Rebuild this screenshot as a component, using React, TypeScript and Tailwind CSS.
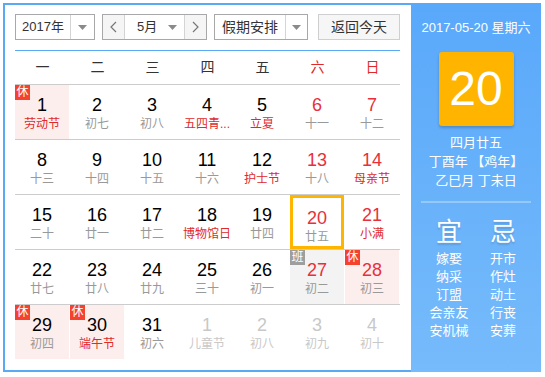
import React from "react";

type Day = {
  n: number;
  sub: string;
  red?: boolean; // number red (weekend)
  fest?: boolean; // sub text red
  dim?: boolean; // other month
  badge?: "休" | "班";
  today?: boolean;
};

const weeks: Day[][] = [
  [
    { n: 1, sub: "劳动节", fest: true, badge: "休" },
    { n: 2, sub: "初七" },
    { n: 3, sub: "初八" },
    { n: 4, sub: "五四青...", fest: true },
    { n: 5, sub: "立夏", fest: true },
    { n: 6, sub: "十一", red: true },
    { n: 7, sub: "十二", red: true },
  ],
  [
    { n: 8, sub: "十三" },
    { n: 9, sub: "十四" },
    { n: 10, sub: "十五" },
    { n: 11, sub: "十六" },
    { n: 12, sub: "护士节", fest: true },
    { n: 13, sub: "十八", red: true },
    { n: 14, sub: "母亲节", red: true, fest: true },
  ],
  [
    { n: 15, sub: "二十" },
    { n: 16, sub: "廿一" },
    { n: 17, sub: "廿二" },
    { n: 18, sub: "博物馆日", fest: true },
    { n: 19, sub: "廿四" },
    { n: 20, sub: "廿五", red: true, today: true },
    { n: 21, sub: "小满", red: true, fest: true },
  ],
  [
    { n: 22, sub: "廿七" },
    { n: 23, sub: "廿八" },
    { n: 24, sub: "廿九" },
    { n: 25, sub: "三十" },
    { n: 26, sub: "初一" },
    { n: 27, sub: "初二", red: true, badge: "班" },
    { n: 28, sub: "初三", red: true, badge: "休" },
  ],
  [
    { n: 29, sub: "初四", badge: "休" },
    { n: 30, sub: "端午节", fest: true, badge: "休" },
    { n: 31, sub: "初六" },
    { n: 1, sub: "儿童节", dim: true },
    { n: 2, sub: "初八", dim: true },
    { n: 3, sub: "初九", dim: true },
    { n: 4, sub: "初十", dim: true },
  ],
];

const heads = ["一", "二", "三", "四", "五", "六", "日"];
const yi = ["嫁娶", "纳采", "订盟", "会亲友", "安机械"];
const ji = ["开市", "作灶", "动土", "行丧", "安葬"];

function Caret() {
  return (
    <svg width="9" height="5" viewBox="0 0 9 5">
      <path d="M0 0h9L4.5 5z" fill="#8a8a8a" />
    </svg>
  );
}

function Chevron({ dir }: { dir: "l" | "r" }) {
  return (
    <svg width="7" height="12" viewBox="0 0 7 12">
      <path
        d={dir === "l" ? "M6 1L1 6l5 5" : "M1 1l5 5-5 5"}
        fill="none"
        stroke="#777"
        strokeWidth="1.2"
      />
    </svg>
  );
}

function Cell({ d }: { d: Day }) {
  const bg =
    d.badge === "休" ? "bg-[#fdeeee]" : d.badge === "班" ? "bg-[#f3f3f3]" : "";
  const numColor = d.dim ? "text-[#c8c8c8]" : d.red ? "text-[#e8303a]" : "text-black";
  const subColor = d.dim ? "text-[#c8c8c8]" : d.fest ? "text-[#e02a2a]" : "text-[#999]";
  return (
    <div
      className={`relative w-[54px] h-[54px] flex flex-col items-center pt-[9px] ${bg} ${
        d.today ? "border-[3px] border-[#ffb400] pt-[6px]" : ""
      }`}
    >
      {d.badge && (
        <span
          className={`absolute top-0 left-0 w-[15px] h-[15px] text-[12px] leading-[15px] text-center text-white ${
            d.badge === "休" ? "bg-[#f5412d]" : "bg-[#9e9e9e]"
          }`}
        >
          {d.badge}
        </span>
      )}
      <span className={`text-[18px] leading-[22px] ${numColor}`}>{d.n}</span>
      <span className={`text-[12px] leading-[16px] whitespace-nowrap ${subColor}`}>{d.sub}</span>
    </div>
  );
}

export default function App() {
  return (
    <div className="w-[545px] h-[377px] bg-white pt-[3px] pl-[3px] font-['Liberation_Sans','Noto_Sans_CJK_SC',sans-serif]">
      <div className="flex w-[538px] h-[369px] border-y-2 border-l-2 border-[#5aa9f5]">
        {/* Calendar */}
        <div className="w-[406px] pl-[10px] pt-[9px]">
          <div className="flex h-[26px] w-[385px] text-[13px] text-[#333]">
            <div className="flex w-[80px] border border-[#a8a8a8]">
              <div className="w-[54px] flex items-center justify-center">2017年</div>
              <div className="flex-1 flex items-center justify-center border-l border-[#d4d4d4]">
                <Caret />
              </div>
            </div>
            <div className="flex ml-[7px] w-[105px] border border-[#a8a8a8]">
              <div className="w-[22px] flex items-center justify-center bg-[#f5f5f5] border-r border-[#d4d4d4]">
                <Chevron dir="l" />
              </div>
              <div className="w-[59px] flex items-center pl-[12px] pr-[7px] justify-between">
                <span>5月</span>
                <Caret />
              </div>
              <div className="flex-1 flex items-center justify-center bg-[#f5f5f5] border-l border-[#d4d4d4]">
                <Chevron dir="r" />
              </div>
            </div>
            <div className="flex ml-[7px] w-[94px] border border-[#a8a8a8]">
              <div className="w-[70px] flex items-center justify-center text-[14px]">假期安排</div>
              <div className="flex-1 flex items-center justify-center border-l border-[#d4d4d4]">
                <Caret />
              </div>
            </div>
            <div className="ml-[10px] w-[82px] flex items-center justify-center border border-[#cfcfcf] bg-[#f6f6f6] text-[14px]">
              返回今天
            </div>
          </div>

          <div className="mt-[10px] h-px w-[385px] bg-[#5aa9f5]" />

          <div className="grid grid-cols-7 w-[385px] h-[33px] items-center text-[14px]">
            {heads.map((h, i) => (
              <div key={h} className={`text-center ${i >= 5 ? "text-[#e02a2a]" : "text-[#333]"}`}>
                {h}
              </div>
            ))}
          </div>

          {weeks.map((w, wi) => (
            <div key={wi} className="grid grid-cols-7 w-[385px] border-t border-[#cccccc]">
              {w.map((d, di) => (
                <Cell key={di} d={d} />
              ))}
            </div>
          ))}
        </div>

        {/* Side panel */}
        <div className="w-[130px] -my-[2px] bg-linear-to-b from-[#59a8fa] to-[#76bbfb] text-white flex flex-col items-center pt-[16px]">
          <div className="text-[13px] leading-[18px]">2017-05-20 星期六</div>
          <div className="mt-[15px] w-[75px] h-[74px] rounded-[3px] bg-[#ffb400] shadow-[0_2px_3px_rgba(0,0,0,0.2)] flex items-center justify-center text-[48px] leading-none">
            20
          </div>
          <div className="mt-[7px] text-[13px] leading-[19px] text-center">
            <div>四月廿五</div>
            <div>丁酉年 【鸡年】</div>
            <div>乙巳月 丁未日</div>
          </div>
          <div className="mt-[11px] h-[2px] w-[110px] bg-white/30" />
          <div className="mt-[14px] flex w-[108px]">
            <div className="w-[54px] flex flex-col items-center">
              <div className="text-[26px] leading-[30px] [text-shadow:0_2px_2px_rgba(0,0,0,0.15)]">宜</div>
              <div className="mt-[3px] text-[13px] leading-[18px] text-center">
                {yi.map((t) => (
                  <div key={t}>{t}</div>
                ))}
              </div>
            </div>
            <div className="w-[54px] flex flex-col items-center">
              <div className="text-[26px] leading-[30px] [text-shadow:0_2px_2px_rgba(0,0,0,0.15)]">忌</div>
              <div className="mt-[3px] text-[13px] leading-[18px] text-center">
                {ji.map((t) => (
                  <div key={t}>{t}</div>
                ))}
              </div>
            </div>
          </div>
        </div>
      </div>
    </div>
  );
}
